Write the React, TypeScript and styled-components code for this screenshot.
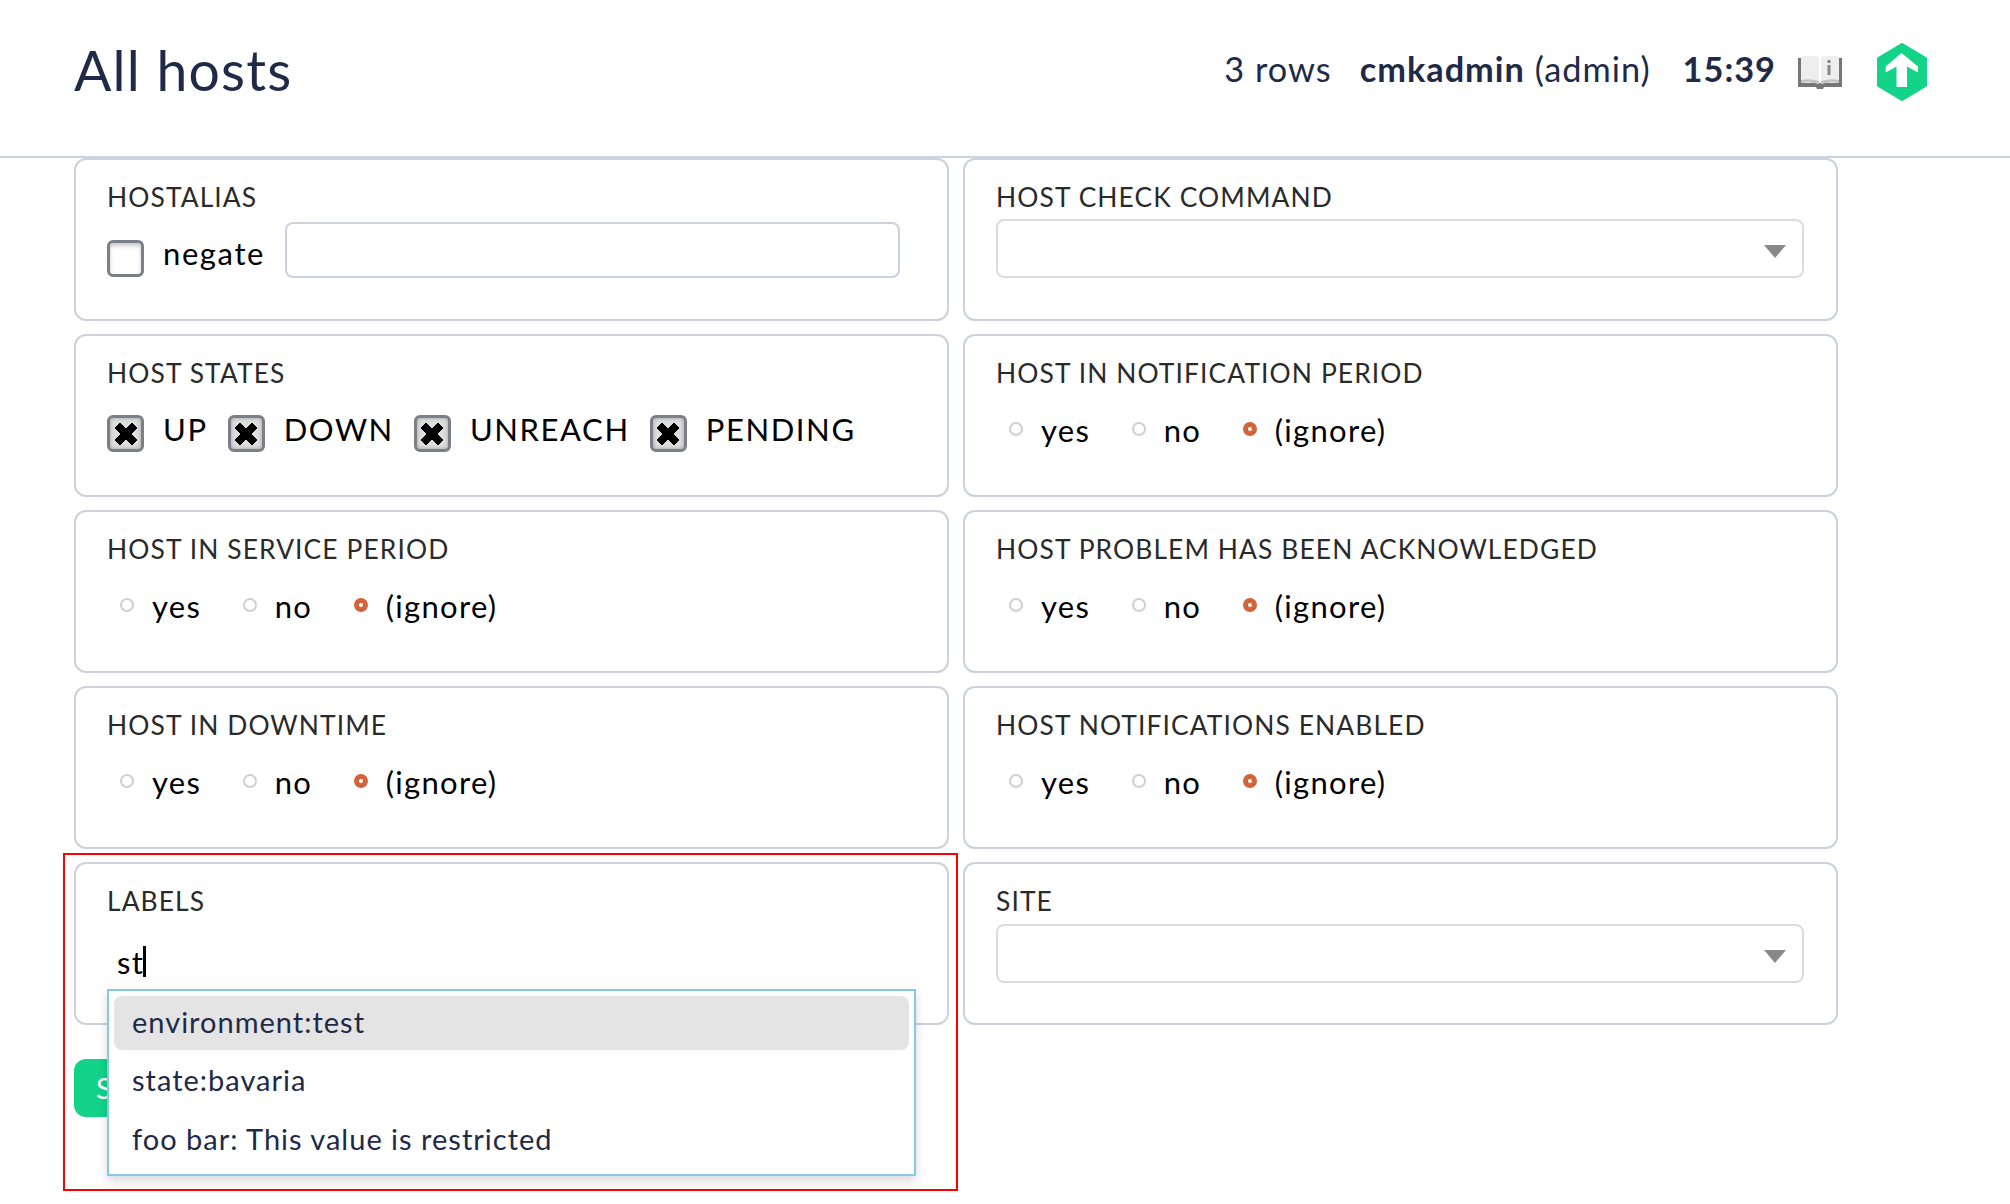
import styled, { createGlobalStyle } from 'styled-components'

const GlobalStyle = createGlobalStyle`
  html, body {
    margin: 0;
    height: 100%;
    background: #fff;
    overflow: hidden;
  }
  body {
    font-family: Lato, "Liberation Sans", sans-serif;
    color: #000;
  }
`

const Page = styled.div`
  position: relative;
  width: 2010px;
  height: 1204px;
  overflow: hidden;
`

const Header = styled.header`
  display: flex;
  align-items: center;
  justify-content: space-between;
  box-sizing: border-box;
  height: 158px;
  padding: 0 83px 20px 74px;
  border-bottom: 2px solid #cdd0de;
  color: #1e2a47;
`

const Title = styled.h1`
  margin: 2px 0 0;
  font-size: 55.3px;
  font-weight: 400;
  letter-spacing: 1.2px;
`

const HeaderRight = styled.div`
  display: flex;
  align-items: center;
  font-size: 34.3px;
  letter-spacing: 1px;
`

const Rows = styled.span`
  margin-right: 28px;
`

const User = styled.span`
  margin-right: 32px;
  b {
    font-weight: 700;
  }
`

const Clock = styled.b`
  font-weight: 700;
  margin-right: 22px;
`

const BookIcon = styled.svg`
  width: 44px;
  height: 34px;
  margin-top: 7px;
  margin-right: 35px;
`

const LogoIcon = styled.svg`
  width: 50px;
  height: 58px;
  margin-top: 8px;
`

const FilterGrid = styled.div`
  display: grid;
  grid-template-columns: 875px 875px;
  grid-auto-rows: 163px;
  gap: 13px 14px;
  padding-left: 74px;
`

const Card = styled.section`
  box-sizing: border-box;
  padding: 22px 31px 0;
  border: 2px solid #cdd0de;
  border-radius: 12px;
  background: #fff;
`

const CardLabel = styled.div`
  height: 32px;
  margin: -1px 0 1px;
  line-height: 32px;
  font-size: 26.4px;
  letter-spacing: 1.1px;
  color: #2a2a2a;
`

const Row = styled.div<{ $top: number }>`
  display: flex;
  align-items: center;
  margin-top: ${(p) => p.$top}px;
  font-size: 31px;
  letter-spacing: 1.6px;
`

const Check = styled.span<{ $on?: boolean }>`
  display: flex;
  align-items: center;
  justify-content: center;
  flex: none;
  box-sizing: border-box;
  width: 37px;
  height: 37px;
  margin-top: 10px;
  margin-right: 19px;
  border: 3px solid #7b7f88;
  border-radius: 6px;
  background: ${(p) => (p.$on ? '#dedede' : '#fff')};
  box-shadow: ${(p) => (p.$on ? 'inset 0 0 4px rgba(0, 0, 0, 0.3)' : 'inset 0 3px 4px rgba(0, 0, 0, 0.2)')};
`

const CheckItem = styled.span`
  margin-right: 20px;
  white-space: nowrap;
`

const NegateText = styled.span`
  margin-right: 20px;
`

const TextBox = styled.div`
  flex: none;
  box-sizing: border-box;
  width: 615px;
  height: 56px;
  margin-top: -6px;
  border: 2px solid #cdd0de;
  border-radius: 8px;
`

const SelectBox = styled.div<{ $top: number }>`
  position: relative;
  box-sizing: border-box;
  width: 808px;
  height: 59px;
  margin-top: ${(p) => p.$top}px;
  border: 2px solid #dcdcdc;
  border-radius: 8px;

  &::after {
    content: '';
    position: absolute;
    right: 16px;
    top: 24px;
    border-left: 11px solid transparent;
    border-right: 11px solid transparent;
    border-top: 13px solid #888;
  }
`

const RadioRow = styled.div`
  display: flex;
  align-items: center;
  margin-top: 21.5px;
  padding-left: 13px;
  font-size: 31px;
  letter-spacing: 1.3px;
`

const Radio = styled.span<{ $on?: boolean }>`
  flex: none;
  box-sizing: border-box;
  width: 14px;
  height: 14px;
  margin-top: -2px;
  margin-right: 18px;
  border-radius: 50%;
  border: ${(p) => (p.$on ? '5px solid #d1643a' : '2px solid #cfcfcf')};
  background: #fff;
`

const RadioText = styled.span`
  margin-right: 41.5px;
`

const TypedRow = styled.div`
  display: flex;
  align-items: center;
  margin-top: 26.5px;
  padding-left: 10px;
  height: 36px;
  font-size: 31px;
  letter-spacing: 1.3px;
`

const Caret = styled.span`
  width: 3px;
  height: 31px;
  margin-left: -1px;
  background: #000;
`

const SaveButton = styled.div`
  box-sizing: border-box;
  width: 120px;
  height: 58px;
  margin: 34px 0 0 74px;
  padding-left: 22px;
  border-radius: 12px;
  background: #13d389;
  color: #fff;
  font-size: 29px;
  line-height: 58px;
`

const Dropdown = styled.ul`
  position: absolute;
  left: 107px;
  top: 989px;
  box-sizing: border-box;
  width: 809px;
  height: 187px;
  margin: 0;
  padding: 5px;
  list-style: none;
  border: 2px solid #84c8ec;
  background: #fff;
  box-shadow: 0 5px 10px rgba(0, 0, 0, 0.15);
`

const Option = styled.li<{ $active?: boolean }>`
  box-sizing: border-box;
  height: ${(p) => (p.$active ? 54 : 59)}px;
  margin-bottom: ${(p) => (p.$active ? 5 : 0)}px;
  padding-left: 18px;
  line-height: ${(p) => (p.$active ? 51 : 49)}px;
  font-size: 29px;
  letter-spacing: 1px;
  color: #1e2a47;
  border-radius: 8px;
  background: ${(p) => (p.$active ? '#e4e4e4' : 'transparent')};
`

const Highlight = styled.div`
  position: absolute;
  left: 63px;
  top: 853px;
  box-sizing: border-box;
  width: 895px;
  height: 338px;
  border: 2px solid #f00;
  pointer-events: none;
`

const XMark = () => (
  <svg width="22" height="22" viewBox="0 0 22 22">
    <path d="M5 0 L11 6 L17 0 L22 5 L16 11 L22 17 L17 22 L11 16 L5 22 L0 17 L6 11 L0 5 Z" fill="#000" stroke="#000" strokeWidth="1" strokeLinejoin="round" />
  </svg>
)

const TriState = () => (
  <RadioRow>
    <Radio />
    <RadioText>yes</RadioText>
    <Radio />
    <RadioText>no</RadioText>
    <Radio $on />
    <span>(ignore)</span>
  </RadioRow>
)

function App() {
  return (
    <Page>
      <GlobalStyle />
      <Header>
        <Title>All hosts</Title>
        <HeaderRight>
          <Rows>3 rows</Rows>
          <User>
            <b>cmkadmin</b> (admin)
          </User>
          <Clock>15:39</Clock>
          <BookIcon viewBox="0 0 44 34">
            <path d="M0 3 H3 V28 H41 V3 H44 V32 H26 L25 34 H19 L18 32 H0 Z" fill="#777" />
            <path d="M3 2 Q12 -1 21 2 V29 Q12 26 3 28 Z" fill="#eee" />
            <path d="M23 2 Q32 -1 41 2 V28 Q32 26 23 29 Z" fill="#eee" />
            <path d="M3 25 Q12 23 21 26 V29 Q12 26 3 28 Z" fill="#c4c4c4" />
            <path d="M23 26 Q32 23 41 25 V28 Q32 26 23 29 Z" fill="#c4c4c4" />
            <rect x="29.5" y="10" width="3" height="10" fill="#888" />
            <rect x="29.5" y="5" width="3" height="3" fill="#888" />
          </BookIcon>
          <LogoIcon viewBox="0 0 50 58">
            <path d="M25 1.5 L48.5 15.5 V42.5 L25 56.5 L1.5 42.5 V15.5 Z" fill="#13d389" stroke="#13d389" strokeWidth="3" strokeLinejoin="round" />
            <path d="M24.5 10 L41 23.5 V29.5 L30 23.5 V44 H19.5 V23.5 L8.7 29.5 V23.5 Z" fill="#fff" />
          </LogoIcon>
        </HeaderRight>
      </Header>

      <FilterGrid>
        <Card>
          <CardLabel>HOSTALIAS</CardLabel>
          <Row $top={15}>
            <Check />
            <NegateText>negate</NegateText>
            <TextBox />
          </Row>
        </Card>
        <Card>
          <CardLabel>HOST CHECK COMMAND</CardLabel>
          <SelectBox $top={6} />
        </Card>

        <Card>
          <CardLabel>HOST STATES</CardLabel>
          <Row $top={16}>
            <Check $on><XMark /></Check>
            <CheckItem>UP</CheckItem>
            <Check $on><XMark /></Check>
            <CheckItem>DOWN</CheckItem>
            <Check $on><XMark /></Check>
            <CheckItem>UNREACH</CheckItem>
            <Check $on><XMark /></Check>
            <CheckItem>PENDING</CheckItem>
          </Row>
        </Card>
        <Card>
          <CardLabel>HOST IN NOTIFICATION PERIOD</CardLabel>
          <TriState />
        </Card>

        <Card>
          <CardLabel>HOST IN SERVICE PERIOD</CardLabel>
          <TriState />
        </Card>
        <Card>
          <CardLabel>HOST PROBLEM HAS BEEN ACKNOWLEDGED</CardLabel>
          <TriState />
        </Card>

        <Card>
          <CardLabel>HOST IN DOWNTIME</CardLabel>
          <TriState />
        </Card>
        <Card>
          <CardLabel>HOST NOTIFICATIONS ENABLED</CardLabel>
          <TriState />
        </Card>

        <Card>
          <CardLabel>LABELS</CardLabel>
          <TypedRow>
            st
            <Caret />
          </TypedRow>
        </Card>
        <Card>
          <CardLabel>SITE</CardLabel>
          <SelectBox $top={7} />
        </Card>
      </FilterGrid>

      <SaveButton>Save</SaveButton>

      <Dropdown>
        <Option $active>environment:test</Option>
        <Option>state:bavaria</Option>
        <Option>foo bar: This value is restricted</Option>
      </Dropdown>
      <Highlight />
    </Page>
  )
}

export default App
